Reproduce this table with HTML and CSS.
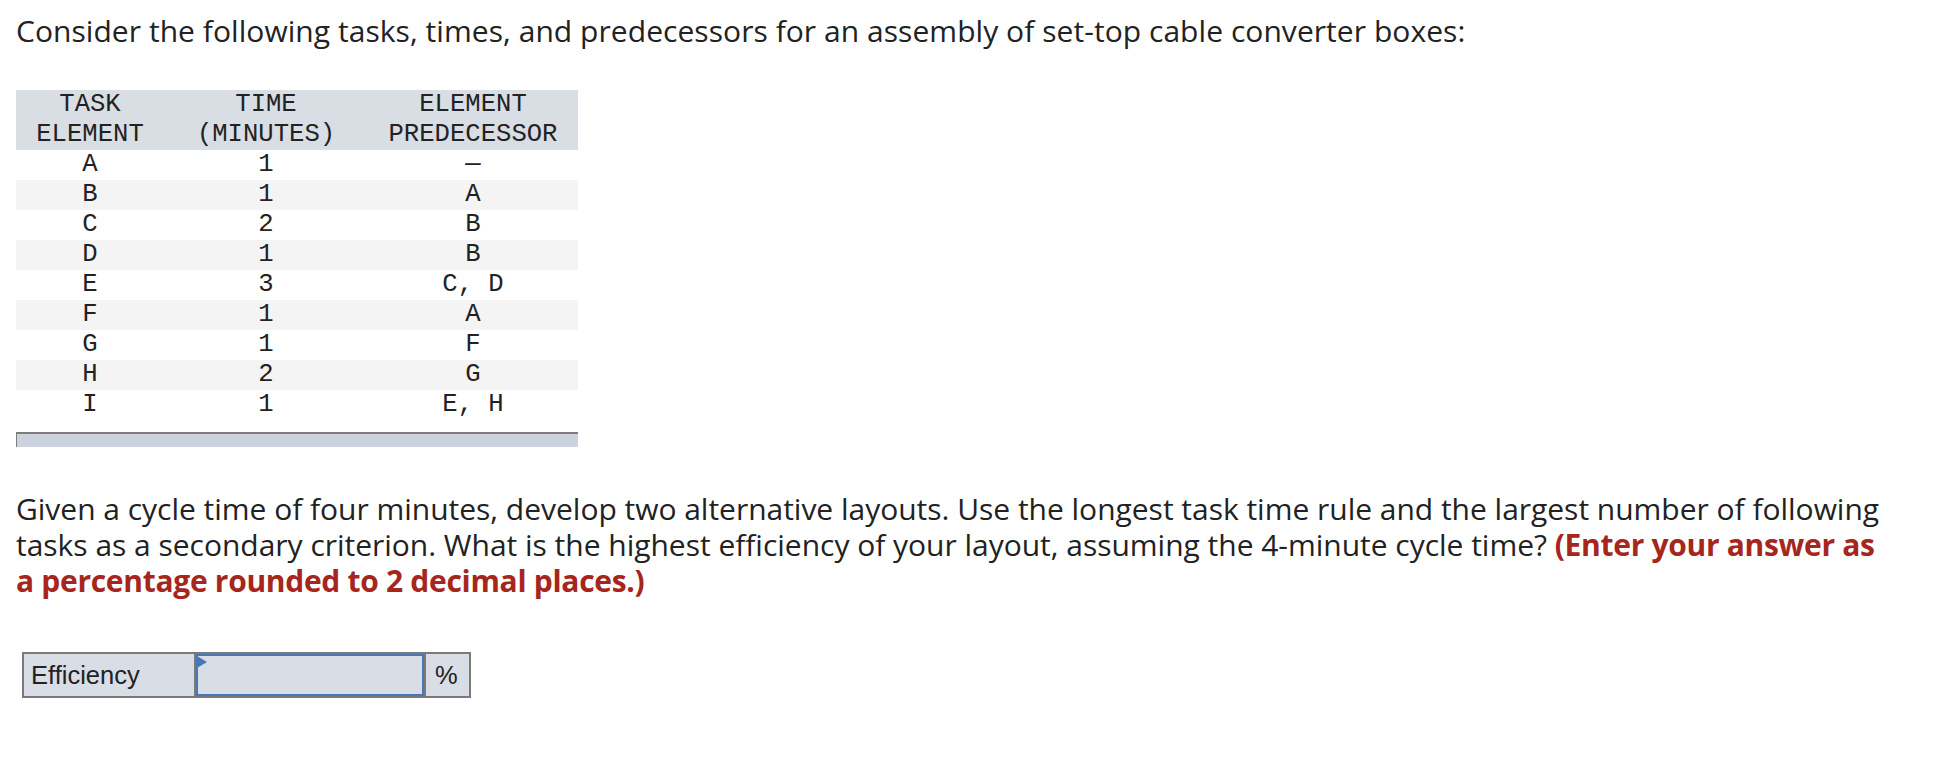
FILE: index.html
```html
<!DOCTYPE html>
<html lang="en">
<head>
<meta charset="utf-8">
<title>Assembly line balancing</title>
<link rel="stylesheet" href="styles.css">
</head>
<body>
<main class="question">
  <p class="intro">Consider the following tasks, times, and predecessors for an assembly of set-top cable converter boxes:</p>

  <div class="table-wrap">
    <table class="tasks">
      <thead>
        <tr>
          <th class="c1">TASK<br>ELEMENT</th>
          <th class="c2">TIME<br>(MINUTES)</th>
          <th class="c3">ELEMENT<br>PREDECESSOR</th>
        </tr>
      </thead>
      <tbody>
        <tr><td>A</td><td>1</td><td>—</td></tr>
        <tr><td>B</td><td>1</td><td>A</td></tr>
        <tr><td>C</td><td>2</td><td>B</td></tr>
        <tr><td>D</td><td>1</td><td>B</td></tr>
        <tr><td>E</td><td>3</td><td>C, D</td></tr>
        <tr><td>F</td><td>1</td><td>A</td></tr>
        <tr><td>G</td><td>1</td><td>F</td></tr>
        <tr><td>H</td><td>2</td><td>G</td></tr>
        <tr><td>I</td><td>1</td><td>E, H</td></tr>
      </tbody>
    </table>
    <div class="scrollbar"></div>
  </div>

  <p class="prompt">Given a cycle time of four minutes, develop two alternative layouts. Use the longest task time rule and the largest number of following tasks as a secondary criterion. What is the highest efficiency of your layout, assuming the 4-minute cycle time? <strong class="hint">(Enter your answer as a percentage rounded to 2 decimal places.)</strong></p>

  <div class="answer-row">
    <span class="cell label">Efficiency</span>
    <span class="cell input"></span>
    <span class="cell unit">%</span>
  </div>
</main>
</body>
</html>
```

FILE: styles.css
```css
html, body {
  margin: 0;
  padding: 0;
  background: #ffffff;
}

.question {
  padding: 0 16px;
  width: 1875px;
  font-family: "Open Sans", "Lato", sans-serif;
  color: #222222;
}

.intro {
  margin: 13px 0 0;
  font-size: 30px;
  line-height: 36px;
  letter-spacing: 0.05px;
}

.table-wrap {
  margin-top: 41px;
  width: 562px;
}

.tasks {
  border-collapse: collapse;
  width: 562px;
  table-layout: fixed;
  font-family: "Liberation Mono", "DejaVu Sans Mono", monospace;
  font-size: 25.6px;
  color: #222222;
}

.tasks th {
  font-weight: normal;
  background: #d9dde4;
  line-height: 30px;
  padding: 0;
  text-align: center;
}

.tasks .c1 { width: 148px; }
.tasks .c2 { width: 204px; }
.tasks .c3 { width: 210px; }

.tasks td {
  height: 30px;
  line-height: 30px;
  padding: 0;
  text-align: center;
}

.tasks tbody tr:nth-child(even) td {
  background: #f4f4f4;
}

.scrollbar {
  margin-top: 12px;
  height: 13px;
  background: #cdd3de;
  border-top: 2px solid #7d7d7d;
  border-left: 1px solid #7d7d7d;
}

.prompt {
  margin: 44px 0 0;
  font-size: 30px;
  line-height: 36px;
  letter-spacing: -0.02px;
}

.hint {
  color: #a6261d;
  font-weight: 700;
  letter-spacing: -0.3px;
}

.answer-row {
  display: flex;
  margin: 53px 0 0 6px;
  height: 46px;
  font-family: "Liberation Sans", Arial, sans-serif;
  font-size: 25.5px;
  color: #222222;
}

.cell {
  box-sizing: border-box;
  height: 46px;
  border: 2px solid #7a7a7a;
  background: #d9dde5;
  display: flex;
  align-items: center;
}

.label {
  width: 174px;
  padding-left: 7px;
}

.input {
  position: relative;
  width: 232px;
  margin-left: -2px;
  box-shadow: inset 0 0 0 2px #4a78b6;
}

.input::before {
  content: "";
  position: absolute;
  top: 2px;
  left: 1px;
  border-top: 6px solid transparent;
  border-bottom: 6px solid transparent;
  border-left: 10px solid #4a78b6;
}

.unit {
  width: 47px;
  margin-left: -2px;
  padding-left: 9px;
}
```
